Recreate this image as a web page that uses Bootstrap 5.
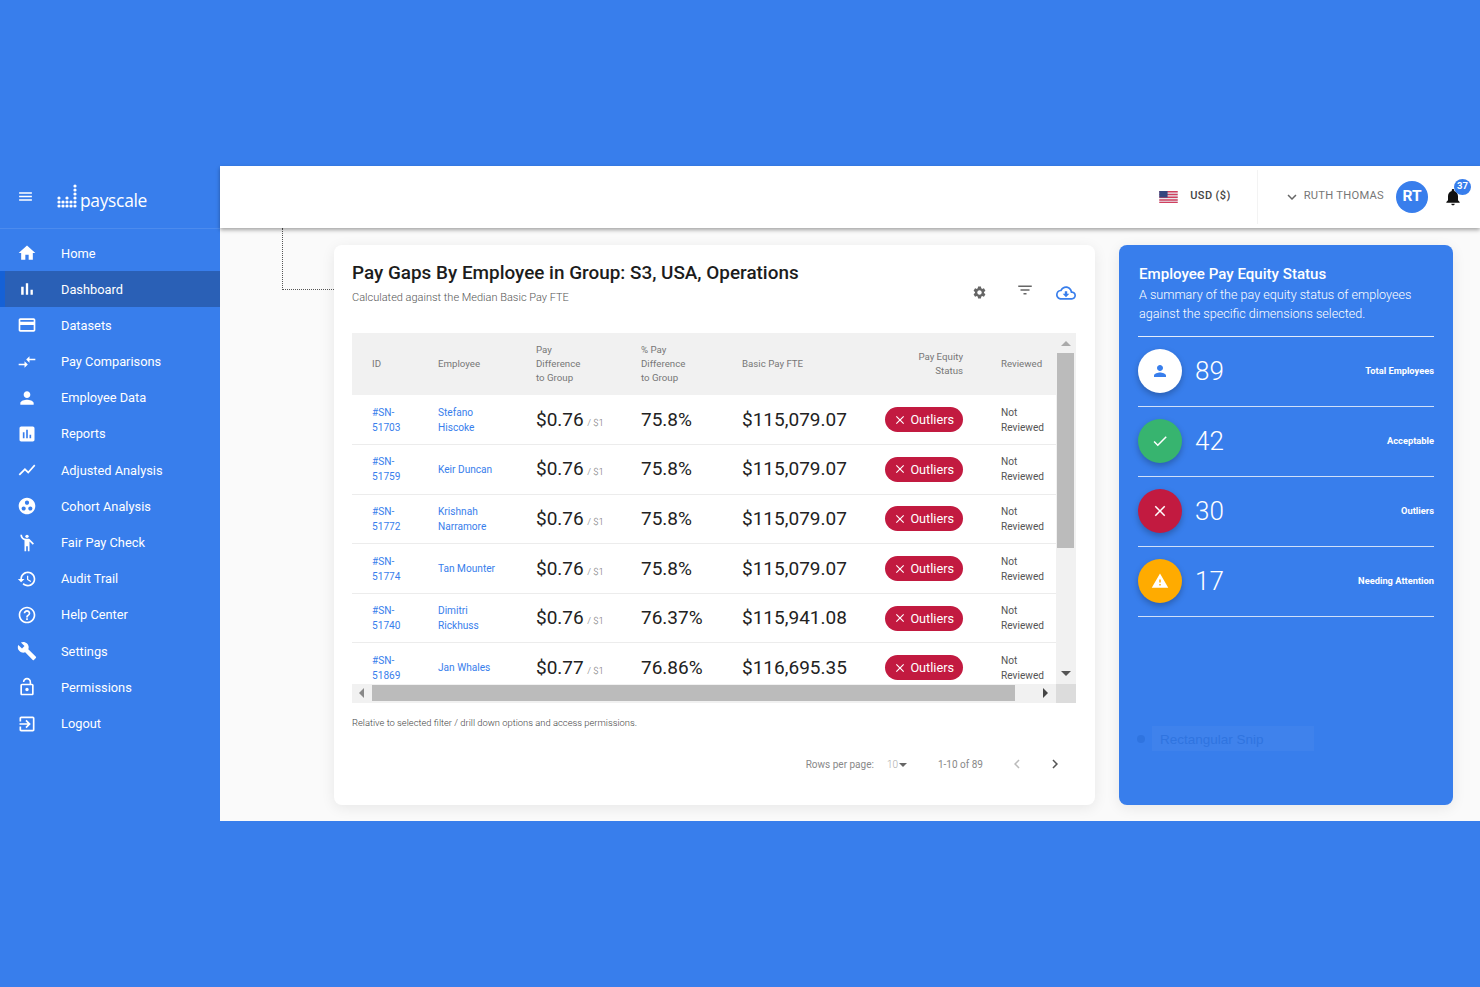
<!DOCTYPE html>
<html lang="en">
<head>
    <meta charset="UTF-8">
    <meta name="viewport" content="width=device-width, initial-scale=1.0">
    <title>Payscale Dashboard</title>
    <link rel="stylesheet" href="https://cdn.jsdelivr.net/npm/bootstrap@5.3.0/dist/css/bootstrap.min.css">
    <style>
        body { background: #387eec; font-family: Roboto, sans-serif; padding: 166px 0; min-height: 987px; }
        .app-frame { height: 655px; background: #fafafa; }
        .side-bar { width: 220px; background: #387eec; color: #fff; flex-shrink: 0; }
        .side-brand { height: 63px; padding: 0 0 0 17px; border-bottom: 1px solid #4c8bee; gap: 23px; }
        .burger { width: 17px; height: 17px; margin-top: -1px; }
        .logo-word { font-family: "Open Sans", sans-serif; font-size: 17.4px; letter-spacing: -.3px; line-height: 1; margin-left: 3px; margin-bottom: 1px; font-weight: 500; }
        .side-menu { padding-top: 6px; }
        .side-link { height: 36.2px; padding-left: 17px; gap: 24px; color: #fff; font-size: 12.8px; text-decoration: none; }
        .side-link svg { width: 20px; height: 20px; flex-shrink: 0; fill: #fff; }
        .side-link.current { background: #2a60b6; border-left: 5px solid #1561d6; padding-left: 12px; }
        .top-strip { height: 62px; background: #fff; box-shadow: 0 2px 4px rgba(0,0,0,.35); z-index: 2; position: relative; padding: 0 17px 1px 0; }
        .flag-box { width: 19px; height: 12px; margin-right: 12px; }
        .usd-text { font-size: 11px; font-weight: 500; letter-spacing: .4px; color: #444; }
        .top-sep { width: 1px; height: 54px; background: #f3f3f3; margin: 0 25px 0 26px; }
        .user-drop { width: 18px; height: 18px; }
        .user-name { font-size: 11.2px; color: #777; letter-spacing: .25px; margin-left: 3px; }
        .user-pic { width: 32px; height: 32px; background: #387eec; color: #fff; font-weight: 700; font-size: 15.5px; margin: 0 15px 0 12px; }
        .bell-wrap { width: 20px; height: 20px; }
        .bell-wrap svg { display: block; width: 20px; height: 20px; fill: #111; }
        .bell-count { position: absolute; top: -8px; left: 11px; width: 17px; height: 16px; background: #387eec; color: #fff; font-size: 9.5px; font-weight: 700; }
        .work-area { position: relative; flex: 1; padding: 17px 27px 16px 114px; gap: 24px; min-height: 0; }
        .dot-trace { position: absolute; left: 62px; top: 0; width: 52px; height: 62px; border-left: 1px dotted #555; border-bottom: 1px dotted #555; }
        .gap-sheet { flex: 0 0 761px; width: 761px; background: #fff; border-radius: 8px; box-shadow: 0 3px 14px rgba(0,0,0,.08); padding: 16px 19px 0 18px; }
        .sheet-head { height: 72px; }
        .sheet-title { font-size: 18.9px; font-weight: 500; color: #1c1c1c; line-height: 24px; margin: 0; }
        .sheet-sub { font-size: 11px; font-weight: 300; color: #555; margin: 5px 0 0; line-height: 16px; }
        .tool-row { margin-top: 24px; }
        .tool-row svg { display: block; }
        .tool-gear { width: 15px; height: 15px; fill: #666; margin-right: 29px; }
        .tool-filter { width: 18px; height: 18px; fill: #666; margin: -4px 22px 0 0; }
        .tool-cloud { width: 20px; height: 20px; fill: #387eec; margin-top: -2px; }
        .grid-box { display: grid; grid-template-columns: 704px 20px; grid-template-rows: 351px 19px; width: 724px; }
        .grid-scroll { overflow: hidden; }
        .pay-table { table-layout: fixed; width: 704px; margin: 0; }
        .pay-table col:nth-child(1) { width: 66px; }
        .pay-table col:nth-child(2) { width: 98px; }
        .pay-table col:nth-child(3) { width: 105px; }
        .pay-table col:nth-child(4) { width: 101px; }
        .pay-table col:nth-child(5) { width: 138px; }
        .pay-table col:nth-child(6) { width: 123px; }
        .pay-table col:nth-child(7) { width: 73px; }
        .pay-table th { background: #f1f1f1; height: 62px; padding: 0 0 0 20px; font-size: 9.7px; font-weight: 400; color: #777; line-height: 14px; vertical-align: middle; border: 0; }
        .pay-table td { height: 49.6px; padding: 0 0 0 20px; vertical-align: middle; border-bottom: 1px solid #ececec; font-size: 10.15px; line-height: 15px; color: #555; }
        .pay-table th.to-right, .pay-table td.to-right { text-align: right; padding: 0 20px 0 0; }
        .pay-table th.rev-col, .pay-table td.rev-col { padding-left: 18px; }
        .pay-table a { color: #387eec; text-decoration: none; }
        .big-num { font-size: 19px; color: #222; position: relative; top: 1px; }
        .per-one { font-size: 9.5px; line-height: 1; color: #777; font-weight: 300; position: relative; top: 1px; margin-left: 1px; }
        .outlier-pill { display: inline-flex; align-items: center; height: 25px; padding: 0 9px 0 8px; background: #c21a40; color: #fff; border-radius: 13px; font-size: 12.7px; font-weight: 400; gap: 3px; }
        .outlier-pill svg { width: 14px; height: 14px; fill: #fff; }
        .v-track { background: #f1f1f1; position: relative; }
        .v-thumb { position: absolute; top: 20px; left: 1px; width: 17px; height: 195px; background: #bbb; }
        .arrow-up, .arrow-down, .arrow-left, .arrow-right { position: absolute; width: 0; height: 0; }
        .arrow-up { top: 8px; left: 5px; border: 5px solid transparent; border-top: 0; border-bottom: 5px solid #aaa; }
        .arrow-down { bottom: 8px; left: 5px; border: 5px solid transparent; border-bottom: 0; border-top: 5px solid #555; }
        .h-track { background: #f1f1f1; position: relative; }
        .h-thumb { position: absolute; left: 20px; top: 1px; width: 643px; height: 16px; background: #bbb; }
        .arrow-left { left: 7px; top: 4px; border: 5px solid transparent; border-left: 0; border-right: 5px solid #888; }
        .arrow-right { right: 8px; top: 4px; border: 5px solid transparent; border-right: 0; border-left: 5px solid #444; }
        .grid-corner { background: #dcdcdc; }
        .foot-note { font-size: 9.4px; font-weight: 300; color: #444; margin: 13px 0 0; line-height: 14px; }
        .pager-row { margin-top: 23px; padding-right: 12px; font-size: 10px; color: #888; height: 22px; }
        .pager-row svg { width: 18px; height: 18px; }
        .page-size { margin: 0 31px 0 13px; font-weight: 300; color: #aaa; }
        .size-caret { display: inline-block; border: 4px solid transparent; border-bottom: 0; border-top: 4px solid #666; vertical-align: 1px; margin-left: 1px; }
        .page-range { margin-right: 25px; }
        .page-prev { fill: #bbb; margin-right: 20px; }
        .page-next { fill: #555; }
        .status-panel { position: relative; flex: 0 0 334px; width: 334px; background: #387eec; color: #fff; border-radius: 8px; box-shadow: 0 3px 14px rgba(0,0,0,.08); padding: 20px 19px 0 19px; }
        .panel-title { font-size: 15.1px; font-weight: 500; line-height: 19px; margin: 0; padding-left: 1px; }
        .panel-sub { font-size: 12.6px; font-weight: 300; line-height: 18.5px; margin: 2px 0 0; padding: 0 0 13px 1px; border-bottom: 1px solid #e3edfc; }
        .stat-row { height: 70px; padding-bottom: 1px; border-bottom: 1px solid #cfe0fa; }
        .stat-disc { width: 44px; height: 44px; box-shadow: 0 3px 6px rgba(0,0,0,.25); margin-right: 13px; }
        .stat-disc svg { width: 18px; height: 18px; }
        .stat-num { font-size: 26px; font-weight: 300; line-height: 1; }
        .stat-name { font-size: 9.3px; font-weight: 700; margin-left: auto; }
        .disc-white { background: #fff; fill: #387eec; }
        .disc-green { background: #37b46f; fill: #fff; }
        .disc-red { background: #c21a40; fill: #fff; }
        .disc-amber { background: #ffab00; fill: #fff; }
        .snip-ghost { position: absolute; left: 8px; top: 481px; width: 187px; height: 25px; color: #2f74e0; font-family: "Liberation Sans", sans-serif; font-size: 13.5px; gap: 7px; }
        .snip-dot { width: 8px; height: 8px; background: #2f74e0; border-radius: 50%; margin-left: 10px; }
        .snip-label { flex: 1; background: #3f82ec; height: 25px; line-height: 27px; padding-left: 8px; }
    </style>
</head>
<body>
    <svg width="0" height="0" class="position-absolute">
        <symbol id="i-close" viewBox="0 0 24 24"><path d="M19 6.41L17.59 5 12 10.59 6.41 5 5 6.41 10.59 12 5 17.59 6.41 19 12 13.41 17.59 19 19 17.59 13.41 12z"/></symbol>
    </svg>

    <div class="app-frame d-flex">
        <!-- sidebar -->
        <div class="side-bar">
            <div class="side-brand d-flex align-items-center">
                <svg class="burger" viewBox="0 0 24 24" fill="#fff"><path d="M3 18h18v-2H3v2zm0-5h18v-2H3v2zm0-7v2h18V6H3z"/></svg>
                <div class="d-flex align-items-end">
                    <svg width="20" height="26" viewBox="0 0 20 26" fill="#fff">
                        <circle cx="2" cy="14" r="1.6"/><circle cx="2" cy="18" r="1.6"/><circle cx="2" cy="22" r="1.6"/>
                        <circle cx="6" cy="18" r="1.6"/><circle cx="6" cy="22" r="1.6"/>
                        <circle cx="10" cy="14" r="1.6"/><circle cx="10" cy="18" r="1.6"/><circle cx="10" cy="22" r="1.6"/>
                        <circle cx="14" cy="18" r="1.6"/><circle cx="14" cy="22" r="1.6"/>
                        <circle cx="18" cy="2" r="1.6"/><circle cx="18" cy="6" r="1.6"/><circle cx="18" cy="10" r="1.6"/><circle cx="18" cy="14" r="1.6"/><circle cx="18" cy="18" r="1.6"/><circle cx="18" cy="22" r="1.6"/>
                    </svg>
                    <span class="logo-word">payscale</span>
                </div>
            </div>
            <nav class="side-menu">
                <a href="#" class="side-link d-flex align-items-center"><svg viewBox="0 0 24 24"><path d="M10 20v-6h4v6h5v-8h3L12 3 2 12h3v8z"/></svg>Home</a>
                <a href="#" class="side-link current d-flex align-items-center"><svg viewBox="0 0 24 24"><path d="M5 9.2h3V19H5zM10.6 5h2.8v14h-2.8zm5.6 8H19v6h-2.8z"/></svg>Dashboard</a>
                <a href="#" class="side-link d-flex align-items-center"><svg viewBox="0 0 24 24"><path d="M20 4H4c-1.11 0-1.99.89-1.99 2L2 18c0 1.11.89 2 2 2h16c1.11 0 2-.89 2-2V6c0-1.11-.89-2-2-2zm0 14H4v-6h16v6zm0-10H4V6h16v2z"/></svg>Datasets</a>
                <a href="#" class="side-link d-flex align-items-center"><svg viewBox="0 0 24 24"><path d="M9.01 14H2v2h7.01v3L13 15l-3.99-4v3zm5.98-1v-3H22V8h-7.01V5L11 9l3.99 4z"/></svg>Pay Comparisons</a>
                <a href="#" class="side-link d-flex align-items-center"><svg viewBox="0 0 24 24"><path d="M12 12c2.21 0 4-1.79 4-4s-1.79-4-4-4-4 1.79-4 4 1.79 4 4 4zm0 2c-2.67 0-8 1.34-8 4v2h16v-2c0-2.66-5.33-4-8-4z"/></svg>Employee Data</a>
                <a href="#" class="side-link d-flex align-items-center"><svg viewBox="0 0 24 24"><path d="M19 3H5c-1.1 0-2 .9-2 2v14c0 1.1.9 2 2 2h14c1.1 0 2-.9 2-2V5c0-1.1-.9-2-2-2zM9 17H7v-7h2v7zm4 0h-2V7h2v10zm4 0h-2v-4h2v4z"/></svg>Reports</a>
                <a href="#" class="side-link d-flex align-items-center"><svg viewBox="0 0 24 24"><path d="M3.5 18.49l6-6.01 4 4L22 6.92l-1.41-1.41-7.09 7.97-4-4L2 16.99z"/></svg>Adjusted Analysis</a>
                <a href="#" class="side-link d-flex align-items-center"><svg viewBox="0 0 24 24"><path d="M12 2C6.48 2 2 6.48 2 12s4.48 10 10 10 10-4.48 10-10S17.52 2 12 2zM8 17.5c-1.38 0-2.5-1.12-2.5-2.5s1.12-2.5 2.5-2.5 2.5 1.12 2.5 2.5-1.12 2.5-2.5 2.5zM9.5 8c0-1.38 1.12-2.5 2.5-2.5s2.5 1.12 2.5 2.5-1.12 2.5-2.5 2.5S9.5 9.38 9.5 8zm6.5 9.5c-1.38 0-2.5-1.12-2.5-2.5s1.12-2.5 2.5-2.5 2.5 1.12 2.5 2.5-1.12 2.5-2.5 2.5z"/></svg>Cohort Analysis</a>
                <a href="#" class="side-link d-flex align-items-center"><svg viewBox="0 0 24 24"><circle cx="12" cy="4" r="2"/><path d="M15.89 8.11C15.5 7.72 14.83 7 13.53 7h-2.54C8.24 6.99 6 4.75 6 2H4c0 3.16 2.11 5.84 5 6.71V22h2v-6h2v6h2V10.05L18.95 14l1.41-1.41-4.47-4.48z"/></svg>Fair Pay Check</a>
                <a href="#" class="side-link d-flex align-items-center"><svg viewBox="0 0 24 24"><path d="M13 3c-4.97 0-9 4.03-9 9H1l3.89 3.89.07.14L9 12H6c0-3.87 3.13-7 7-7s7 3.13 7 7-3.13 7-7 7c-1.93 0-3.68-.79-4.94-2.06l-1.42 1.42C8.27 19.99 10.51 21 13 21c4.97 0 9-4.03 9-9s-4.03-9-9-9zm-1 5v5l4.28 2.54.72-1.21-3.5-2.08V8H12z"/></svg>Audit Trail</a>
                <a href="#" class="side-link d-flex align-items-center"><svg viewBox="0 0 24 24"><path d="M11 18h2v-2h-2v2zm1-16C6.48 2 2 6.48 2 12s4.48 10 10 10 10-4.48 10-10S17.52 2 12 2zm0 18c-4.41 0-8-3.59-8-8s3.59-8 8-8 8 3.59 8 8-3.59 8-8 8zm0-14c-2.21 0-4 1.79-4 4h2c0-1.1.9-2 2-2s2 .9 2 2c0 2-3 1.75-3 5h2c0-2.25 3-2.5 3-5 0-2.21-1.79-4-4-4z"/></svg>Help Center</a>
                <a href="#" class="side-link d-flex align-items-center"><svg viewBox="0 0 24 24"><path d="M22.7 19l-9.1-9.1c.9-2.3.4-5-1.5-6.9-2-2-5-2.4-7.4-1.3L9 6 6 9 1.6 4.7C.4 7.1.9 10.1 2.9 12.1c1.9 1.9 4.6 2.4 6.9 1.5l9.1 9.1c.4.4 1 .4 1.4 0l2.3-2.3c.5-.4.5-1.1.1-1.4z"/></svg>Settings</a>
                <a href="#" class="side-link d-flex align-items-center"><svg viewBox="0 0 24 24"><path d="M12 17c1.1 0 2-.9 2-2s-.9-2-2-2-2 .9-2 2 .9 2 2 2zm6-9h-1V6c0-2.76-2.24-5-5-5S7 3.24 7 6h1.9c0-1.71 1.39-3.1 3.1-3.1 1.71 0 3.1 1.39 3.1 3.1v2H6c-1.1 0-2 .9-2 2v10c0 1.1.9 2 2 2h12c1.1 0 2-.9 2-2V10c0-1.1-.9-2-2-2zm0 12H6V10h12v10z"/></svg>Permissions</a>
                <a href="#" class="side-link d-flex align-items-center"><svg viewBox="0 0 24 24"><path d="M10.09 15.59L11.5 17l5-5-5-5-1.41 1.41L12.67 11H3v2h9.67l-2.58 2.59zM19 3H5c-1.11 0-2 .9-2 2v4h2V5h14v14H5v-4H3v4c0 1.1.89 2 2 2h14c1.1 0 2-.9 2-2V5c0-1.1-.9-2-2-2z"/></svg>Logout</a>
            </nav>
        </div>

        <div class="flex-grow-1 d-flex flex-column">
            <!-- top bar -->
            <div class="top-strip d-flex align-items-center justify-content-end">
                <svg class="flag-box" viewBox="0 0 20 13">
                    <rect width="20" height="13" fill="#e8e8ee"/>
                    <path d="M0 0h20v1.5H0zM0 3h20v1.5H0zM0 6h20v1.5H0zM0 9h20v1.5H0zM0 11.6h20V13H0z" fill="#d0405f"/>
                    <rect width="9" height="7" fill="#35467f"/>
                </svg>
                <span class="usd-text">USD ($)</span>
                <span class="top-sep"></span>
                <svg class="user-drop" viewBox="0 0 24 24" fill="#666"><path d="M16.59 8.59L12 13.17 7.41 8.59 6 10l6 6 6-6z"/></svg>
                <span class="user-name">RUTH THOMAS</span>
                <span class="user-pic rounded-circle d-flex align-items-center justify-content-center">RT</span>
                <span class="bell-wrap position-relative d-block">
                    <svg viewBox="0 0 24 24"><path d="M12 22c1.1 0 2-.9 2-2h-4c0 1.1.89 2 2 2zm6-6v-5c0-3.07-1.64-5.64-4.5-6.32V4c0-.83-.67-1.5-1.5-1.5s-1.5.67-1.5 1.5v.68C7.63 5.36 6 7.92 6 11v5l-2 2v1h16v-1l-2-2z"/></svg>
                    <span class="bell-count rounded-circle d-flex align-items-center justify-content-center">37</span>
                </span>
            </div>

            <div class="work-area d-flex">
                <div class="dot-trace"></div>

                <!-- table card -->
                <section class="gap-sheet">
                    <div class="sheet-head d-flex justify-content-between">
                        <div>
                            <h1 class="sheet-title">Pay Gaps By Employee in Group: S3, USA, Operations</h1>
                            <p class="sheet-sub">Calculated against the Median Basic Pay FTE</p>
                        </div>
                        <div class="tool-row d-flex align-items-start">
                            <svg class="tool-gear" viewBox="0 0 24 24"><path d="M19.14 12.94c.04-.3.06-.61.06-.94 0-.32-.02-.64-.07-.94l2.03-1.58c.18-.14.23-.41.12-.61l-1.92-3.32c-.12-.22-.37-.29-.59-.22l-2.39.96c-.5-.38-1.03-.7-1.62-.94l-.36-2.54c-.04-.24-.24-.41-.48-.41h-3.84c-.24 0-.43.17-.47.41l-.36 2.54c-.59.24-1.13.57-1.62.94l-2.39-.96c-.22-.08-.47 0-.59.22L2.74 8.87c-.12.21-.08.47.12.61l2.03 1.58c-.05.3-.09.63-.09.94s.02.64.07.94l-2.03 1.58c-.18.14-.23.41-.12.61l1.92 3.32c.12.22.37.29.59.22l2.39-.96c.5.38 1.03.7 1.62.94l.36 2.54c.05.24.24.41.48.41h3.84c.24 0 .44-.17.47-.41l.36-2.54c.59-.24 1.13-.56 1.62-.94l2.39.96c.22.08.47 0 .59-.22l1.92-3.32c.12-.22.07-.47-.12-.61l-2.01-1.58zM12 15.6c-1.98 0-3.6-1.62-3.6-3.6s1.62-3.6 3.6-3.6 3.6 1.62 3.6 3.6-1.62 3.6-3.6 3.6z"/></svg>
                            <svg class="tool-filter" viewBox="0 0 24 24"><path d="M10 18h4v-2h-4v2zM3 6v2h18V6H3zm3 7h12v-2H6v2z"/></svg>
                            <svg class="tool-cloud" viewBox="0 0 24 24"><path d="M19.35 10.04C18.67 6.59 15.64 4 12 4 9.11 4 6.6 5.64 5.35 8.04 2.34 8.36 0 10.91 0 14c0 3.31 2.69 6 6 6h13c2.76 0 5-2.24 5-5 0-2.64-2.05-4.78-4.65-4.96zM19 18H6c-2.21 0-4-1.79-4-4 0-2.05 1.53-3.76 3.56-3.97l1.07-.11.5-.95C8.08 7.14 9.94 6 12 6c2.62 0 4.88 1.86 5.39 4.43l.3 1.5 1.53.11c1.56.1 2.78 1.41 2.78 2.96 0 1.65-1.35 3-3 3zm-5.55-8h-2.9v3H8l4 4 4-4h-2.55z"/></svg>
                        </div>
                    </div>

                    <div class="grid-box">
                        <div class="grid-scroll">
                            <table class="table pay-table">
                                <colgroup><col><col><col><col><col><col><col></colgroup>
                                <thead>
                                    <tr><th>ID</th><th>Employee</th><th>Pay<br>Difference<br>to Group</th><th>% Pay<br>Difference<br>to Group</th><th>Basic Pay FTE</th><th class="to-right">Pay Equity<br>Status</th><th class="rev-col">Reviewed</th></tr>
                                </thead>
                                <tbody id="pay-rows"></tbody>
                            </table>
                        </div>
                        <div class="v-track"><span class="arrow-up"></span><div class="v-thumb"></div><span class="arrow-down"></span></div>
                        <div class="h-track"><span class="arrow-left"></span><div class="h-thumb"></div><span class="arrow-right"></span></div>
                        <div class="grid-corner"></div>
                    </div>

                    <p class="foot-note">Relative to selected filter / drill down options and access permissions.</p>

                    <div class="pager-row d-flex align-items-center justify-content-end">
                        <span>Rows per page:</span>
                        <span class="page-size">10<span class="size-caret"></span></span>
                        <span class="page-range">1-10 of 89</span>
                        <svg class="page-prev" viewBox="0 0 24 24"><path d="M15.41 7.41L14 6l-6 6 6 6 1.41-1.41L10.83 12z"/></svg>
                        <svg class="page-next" viewBox="0 0 24 24"><path d="M10 6L8.59 7.41 13.17 12l-4.58 4.59L10 18l6-6z"/></svg>
                    </div>
                </section>

                <!-- status panel -->
                <aside class="status-panel">
                    <h2 class="panel-title">Employee Pay Equity Status</h2>
                    <p class="panel-sub">A summary of the pay equity status of employees against the specific dimensions selected.</p>
                    <div class="stat-row d-flex align-items-center">
                        <span class="stat-disc disc-white rounded-circle d-flex align-items-center justify-content-center"><svg viewBox="0 0 24 24"><path d="M12 12c2.21 0 4-1.79 4-4s-1.79-4-4-4-4 1.79-4 4 1.79 4 4 4zm0 2c-2.67 0-8 1.34-8 4v2h16v-2c0-2.66-5.33-4-8-4z"/></svg></span>
                        <span class="stat-num">89</span><span class="stat-name">Total Employees</span>
                    </div>
                    <div class="stat-row d-flex align-items-center">
                        <span class="stat-disc disc-green rounded-circle d-flex align-items-center justify-content-center"><svg viewBox="0 0 24 24"><path d="M9 16.17L4.83 12l-1.42 1.41L9 19 21 7l-1.41-1.41z"/></svg></span>
                        <span class="stat-num">42</span><span class="stat-name">Acceptable</span>
                    </div>
                    <div class="stat-row d-flex align-items-center">
                        <span class="stat-disc disc-red rounded-circle d-flex align-items-center justify-content-center"><svg viewBox="0 0 24 24"><use href="#i-close"/></svg></span>
                        <span class="stat-num">30</span><span class="stat-name">Outliers</span>
                    </div>
                    <div class="stat-row d-flex align-items-center">
                        <span class="stat-disc disc-amber rounded-circle d-flex align-items-center justify-content-center"><svg viewBox="0 0 24 24"><path d="M1 21h22L12 2 1 21zm12-3h-2v-2h2v2zm0-4h-2v-4h2v4z"/></svg></span>
                        <span class="stat-num">17</span><span class="stat-name">Needing Attention</span>
                    </div>
                    <div class="snip-ghost d-flex align-items-center"><span class="snip-dot"></span><span class="snip-label">Rectangular Snip</span></div>
                </aside>
            </div>
        </div>
    </div>

    <script src="https://cdn.jsdelivr.net/npm/bootstrap@5.3.0/dist/js/bootstrap.bundle.min.js"></script>
    <script>
        var rows = [
            ["51703", "Stefano<br>Hiscoke", "$0.76", "75.8%", "$115,079.07"],
            ["51759", "Keir Duncan", "$0.76", "75.8%", "$115,079.07"],
            ["51772", "Krishnah<br>Narramore", "$0.76", "75.8%", "$115,079.07"],
            ["51774", "Tan Mounter", "$0.76", "75.8%", "$115,079.07"],
            ["51740", "Dimitri<br>Rickhuss", "$0.76", "76.37%", "$115,941.08"],
            ["51869", "Jan Whales", "$0.77", "76.86%", "$116,695.35"]
        ];
        var body = document.getElementById("pay-rows");
        var html = "";
        rows.forEach(function (r) {
            html += '<tr><td><a href="#">#SN-<br>' + r[0] + '</a></td>'
                + '<td><a href="#">' + r[1] + '</a></td>'
                + '<td><span class="big-num">' + r[2] + '</span> <span class="per-one">/ $1</span></td>'
                + '<td><span class="big-num">' + r[3] + '</span></td>'
                + '<td><span class="big-num">' + r[4] + '</span></td>'
                + '<td class="to-right"><span class="outlier-pill"><svg viewBox="0 0 24 24"><use href="#i-close"/></svg>Outliers</span></td>'
                + '<td class="rev-col">Not<br>Reviewed</td></tr>';
        });
        body.innerHTML = html;
    </script>
</body>
</html>
